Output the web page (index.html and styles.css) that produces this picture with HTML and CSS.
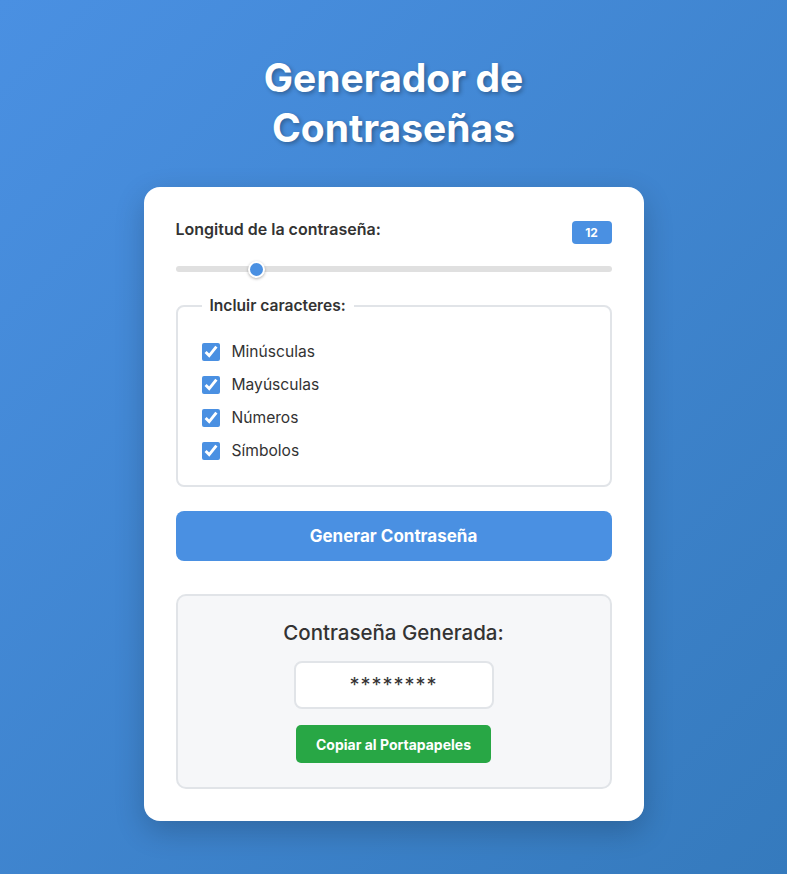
FILE: index.html
```html
<!DOCTYPE html>
<html lang="es">
<head>
<meta charset="utf-8">
<title>Generador de Contraseñas</title>
<link rel="stylesheet" href="styles.css">
</head>
<body>
<main class="page">
  <h1 class="title">Generador de<br>Contraseñas</h1>
  <section class="card">
    <div class="length-row">
      <label class="length-label" for="len">Longitud de la contraseña:</label>
      <span class="badge">12</span>
    </div>
    <input class="slider" id="len" type="range" min="4" max="50" value="12">
    <fieldset class="options">
      <legend class="legend">Incluir caracteres:</legend>
      <label class="opt"><input type="checkbox" checked> Minúsculas</label>
      <label class="opt"><input type="checkbox" checked> Mayúsculas</label>
      <label class="opt"><input type="checkbox" checked> Números</label>
      <label class="opt"><input type="checkbox" checked> Símbolos</label>
    </fieldset>
    <button class="generate">Generar Contraseña</button>
    <div class="result">
      <h2 class="result-title">Contraseña Generada:</h2>
      <div class="pw">********</div>
      <button class="copy">Copiar al Portapapeles</button>
    </div>
  </section>
</main>
</body>
</html>
```

FILE: styles.css
```css
* { box-sizing: border-box; }
html, body { height: 100%; }
body {
  margin: 0;
  font-family: Inter, "Noto Sans", sans-serif;
  color: #333;
  background: linear-gradient(135deg, #4a90e2 0%, #357abd 100%);
  min-height: 874px;
}
.page {
  display: flex;
  flex-direction: column;
  align-items: center;
  padding-top: 53px;
}
.title {
  margin: 0 0 34px;
  color: #fff;
  font-size: 39px;
  font-weight: 700;
  line-height: 50px;
  text-align: center;
  text-shadow: 2px 2px 4px rgba(0,0,0,0.3);
}
.card {
  width: 500px;
  background: #fff;
  border-radius: 16px;
  padding: 32px 32px 32px;
  box-shadow: 0 10px 30px rgba(0,0,0,0.2);
}
.length-row {
  display: flex;
  justify-content: space-between;
  align-items: flex-start;
}
.length-label {
  font-size: 16px;
  font-weight: 600;
  color: #333;
  line-height: 21px;
}
.badge {
  margin-top: 2px;
  background: #4a90e2;
  color: #fff;
  font-size: 12px;
  font-weight: 700;
  width: 40px;
  height: 23px;
  line-height: 23px;
  text-align: center;
  border-radius: 4px;
}
.slider {
  -webkit-appearance: none;
  appearance: none;
  display: block;
  width: 100%;
  height: 6px;
  margin: 22px 0 24px;
  background: #e0e0e0;
  border-radius: 3px;
  outline: none;
}
.slider::-webkit-slider-thumb {
  -webkit-appearance: none;
  appearance: none;
  width: 17px;
  height: 17px;
  border-radius: 50%;
  background: #4a90e2;
  border: 2px solid #fff;
  box-shadow: 0 1px 3px rgba(0,0,0,0.3);
}
.options {
  margin: 0;
  border: 2px solid #e1e4e8;
  border-radius: 8px;
  padding: 27px 24px 24px;
  display: flex;
  flex-direction: column;
  gap: 13px;
}
.legend {
  padding: 0 8px;
  margin-left: 0;
  font-size: 15.6px;
  font-weight: 600;
  color: #333;
}
.opt {
  display: flex;
  align-items: center;
  gap: 12px;
  font-size: 15.6px;
  color: #333;
  line-height: 20px;
}
.opt input {
  margin: 0;
  width: 18px;
  height: 18px;
  accent-color: #4a90e2;
}
.generate {
  display: block;
  width: 100%;
  margin-top: 24px;
  height: 50px;
  border: none;
  border-radius: 8px;
  background: #4a90e2;
  color: #fff;
  font-family: inherit;
  font-size: 17px;
  font-weight: 700;
}
.result {
  margin-top: 33px;
  background: #f6f7f9;
  border: 2px solid #e1e4e8;
  border-radius: 10px;
  padding: 23px 20px 24px;
  display: flex;
  flex-direction: column;
  align-items: center;
}
.result-title {
  margin: 0 0 14px;
  font-size: 20.5px;
  font-weight: 500;
  color: #333;
  line-height: 28px;
}
.pw {
  width: 200px;
  height: 48px;
  background: #fff;
  border: 2px solid #e1e4e8;
  border-radius: 8px;
  display: flex;
  align-items: center;
  justify-content: center;
  font-size: 20px;
  letter-spacing: 1px;
  color: #333;
}
.copy {
  margin-top: 16px;
  width: 195px;
  height: 38px;
  border: none;
  border-radius: 5px;
  background: #28a745;
  color: #fff;
  font-family: inherit;
  font-size: 14px;
  font-weight: 700;
}
```
